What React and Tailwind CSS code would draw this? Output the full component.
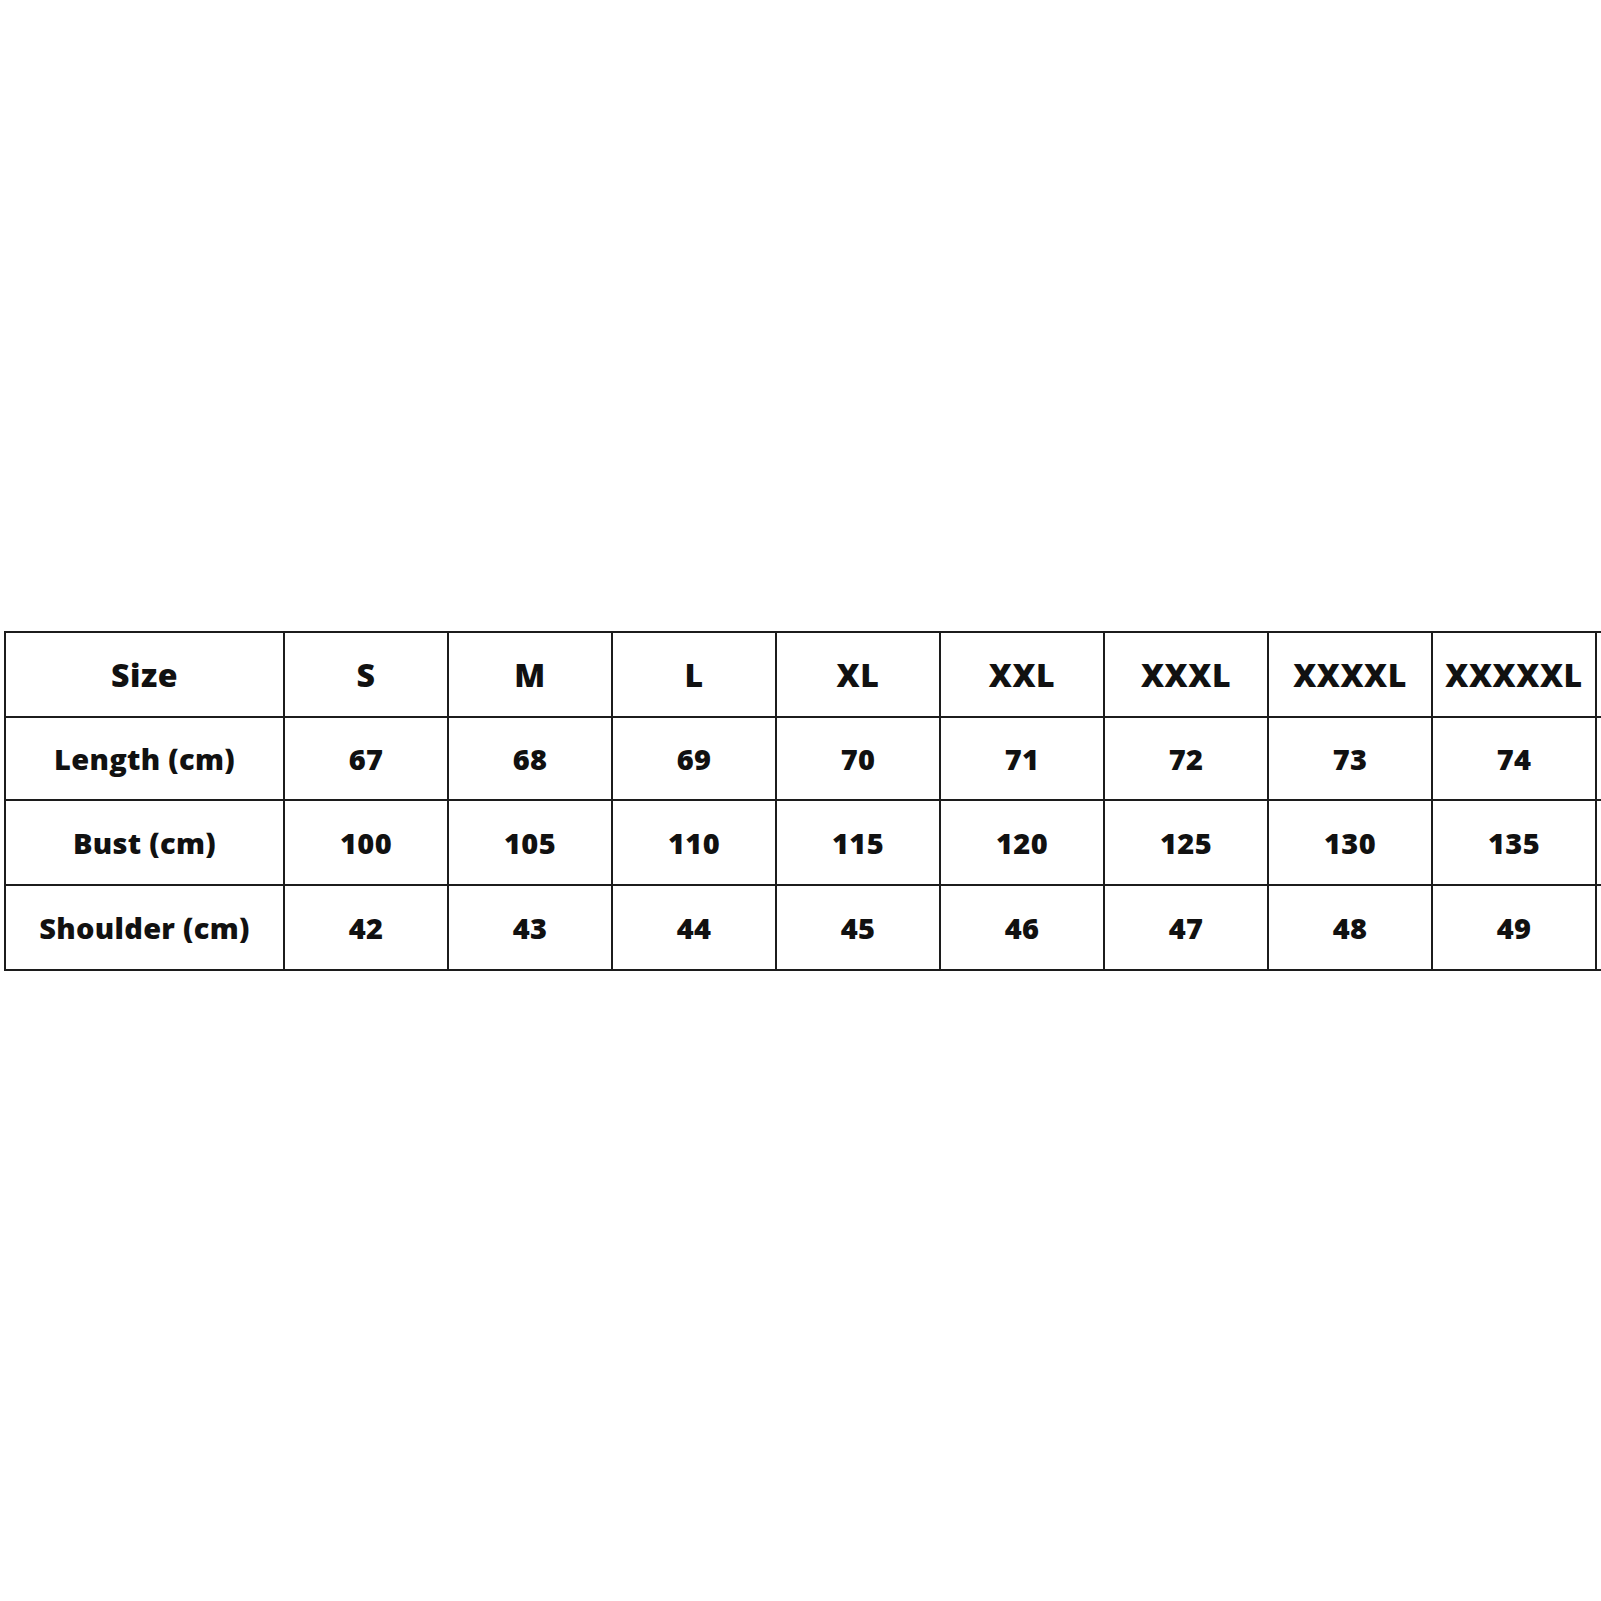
const sizes = ["S", "M", "L", "XL", "XXL", "XXXL", "XXXXL", "XXXXXL"];

const rows = [
  { label: "Length (cm)", values: [67, 68, 69, 70, 71, 72, 73, 74], h: "h-[81px]" },
  { label: "Bust (cm)", values: [100, 105, 110, 115, 120, 125, 130, 135], h: "h-[83px]" },
  { label: "Shoulder (cm)", values: [42, 43, 44, 45, 46, 47, 48, 49], h: "h-[83px]" },
];

const Cell = ({ children, h, head }) => (
  <div
    className={`bg-white flex items-center justify-center ${h} ${
      head ? "text-[32px] tracking-[0.5px]" : "text-[29px] tracking-[0.3px]"
    } font-extrabold text-[#111]`}
  >
    {children}
  </div>
);

const App = () => {
  return (
    <div className="w-[1601px] h-[1601px] bg-white overflow-hidden pt-[631px] pl-[4px]" style={{ fontFamily: '"Open Sans", "Noto Sans", sans-serif' }}>
      <div className="grid grid-cols-[277px_repeat(9,162px)] gap-[2px] bg-[#1c1c1c] p-[2px] w-max">
        <Cell h="h-[83px]" head>Size</Cell>
        {sizes.map((s) => (
          <Cell key={s} h="h-[83px]" head>{s}</Cell>
        ))}
        <Cell h="h-[83px]" head></Cell>
        {rows.map((r) => (
          <>
            <Cell key={r.label} h={r.h}>{r.label}</Cell>
            {r.values.map((v, i) => (
              <Cell key={r.label + i} h={r.h}>{v}</Cell>
            ))}
            <Cell h={r.h}></Cell>
          </>
        ))}
      </div>
    </div>
  );
};

export default App;
